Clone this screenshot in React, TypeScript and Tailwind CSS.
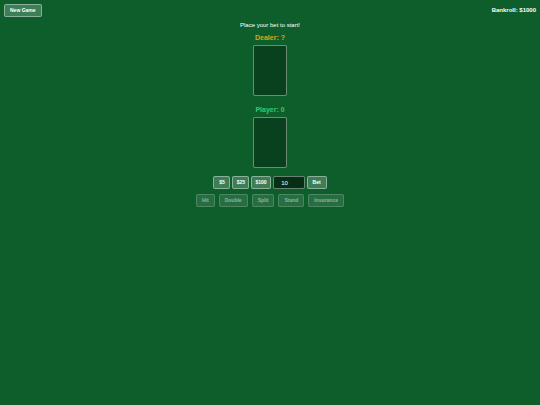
import { useState } from "react";
import type { ButtonHTMLAttributes } from "react";

function GameButton({ className = "", ...rest }: ButtonHTMLAttributes<HTMLButtonElement>) {
  return (
    <button
      type="button"
      className={`h-[13px] rounded-xs border border-white/40 bg-white/20 text-[5px] leading-[7px] font-bold text-white disabled:opacity-50 ${className}`}
      {...rest}
    />
  );
}

function Hand({ title, color }: { title: string; color: string }) {
  return (
    <section className="flex flex-col items-center">
      <h2 className={`text-[7px] leading-2 font-bold ${color}`}>{title}</h2>
      <div className="mt-[3px] h-[51px] w-[34px] rounded-xs border border-white/40 bg-black/30" />
    </section>
  );
}

const chips = [5, 25, 100];
const actions = ["Hit", "Double", "Split", "Stand", "Insurance"];

export default function App() {
  const [bet, setBet] = useState("10");

  return (
    <div className="min-h-screen bg-[#0e5e2c] font-['Liberation_Sans',Arial,sans-serif] text-white">
      <header className="flex items-start justify-between p-1">
        <GameButton className="px-[5px]">New Game</GameButton>
        <p className="pt-[3px] text-[6px] leading-[7px] font-bold">Bankroll: $1000</p>
      </header>
      <main className="flex flex-col items-center">
        <p className="text-[6px] leading-2">Place your bet to start!</p>
        <div className="mt-[5px] flex flex-col gap-[10px]">
          <Hand title="Dealer: ?" color="text-[#e0a010]" />
          <Hand title="Player: 0" color="text-[#2ecc71]" />
        </div>
        <div className="mt-2 flex gap-0.5">
          {chips.map((chip) => (
            <GameButton key={chip} className="min-w-[17px] px-[3px]" onClick={() => setBet(String(chip))}>
              ${chip}
            </GameButton>
          ))}
          <input
            type="text"
            inputMode="numeric"
            aria-label="Bet amount"
            value={bet}
            onChange={(e) => setBet(e.target.value)}
            className="h-[13px] w-8 rounded-xs border border-white/40 bg-black/50 pr-2 text-center text-[6px] leading-[7px] text-white"
          />
          <GameButton className="px-[5px]">Bet</GameButton>
        </div>
        <div className="mt-[5px] flex gap-1">
          {actions.map((action) => (
            <GameButton key={action} disabled className="px-[5px]">
              {action}
            </GameButton>
          ))}
        </div>
      </main>
    </div>
  );
}
